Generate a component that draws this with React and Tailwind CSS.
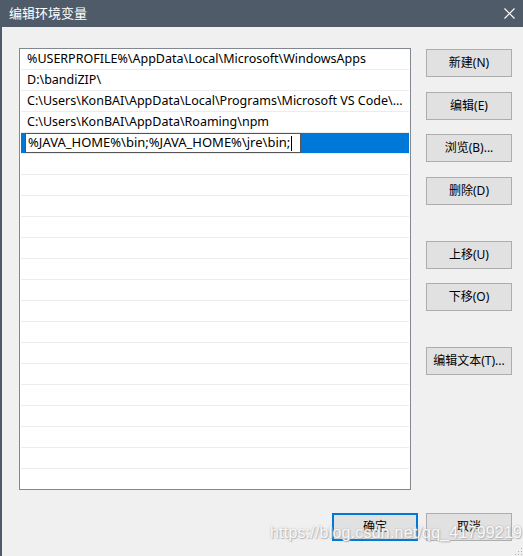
import React from 'react';

const rows = [
  '%USERPROFILE%\\AppData\\Local\\Microsoft\\WindowsApps',
  'D:\\bandiZIP\\',
  'C:\\Users\\KonBAI\\AppData\\Local\\Programs\\Microsoft VS Code\\...',
  'C:\\Users\\KonBAI\\AppData\\Roaming\\npm',
];

const font = { fontFamily: '"Noto Sans", "Noto Sans CJK SC", sans-serif' };

function Btn({ label, className = '', primary }) {
  return (
    <div
      className={`w-[86px] h-[28px] flex items-center justify-center text-[12px] text-black bg-[#e1e1e1] ${primary ? 'border-2 border-[#0078d7]' : 'border border-[#adadad]'} ${className}`}
    >
      {label}
    </div>
  );
}

export default function App() {
  const empty = Array.from({ length: 16 });
  return (
    <div className="w-[523px] h-[556px] flex flex-col overflow-hidden relative" style={font}>
      {/* title bar */}
      <div className="h-[27px] bg-[#4f5b69] flex items-center justify-between pl-[9px] pr-[8px] shrink-0">
        <span className="text-white text-[13px] leading-none">编辑环境变量</span>
        <svg width="11" height="11" viewBox="0 0 11 11">
          <path d="M0.5 0.5 L10.5 10.5 M10.5 0.5 L0.5 10.5" stroke="#fff" strokeWidth="1.2" />
        </svg>
      </div>

      <div className="flex-1 bg-[#f0f0f0] border-l-2 border-[#4f5b69] flex flex-col pl-[17px] pt-[21px]">
        <div className="flex">
          {/* list */}
          <div className="w-[392px] h-[442px] bg-white border border-[#828790] overflow-hidden">
            {rows.map((r, i) => (
              <div key={i} className="h-[21px] mx-[1px] border-b border-[#ececec] flex items-center pl-[6px] pt-[1px] text-[12.5px] text-black whitespace-nowrap">
                {r}
              </div>
            ))}
            <div className="h-[21px] mx-[1px] bg-[#0078d7] flex items-center pl-[4px] border-b border-[#ececec]">
              <div className="w-[276px] h-[20px] bg-white border border-[#555] flex items-center pl-[2px] text-[13px] text-black whitespace-nowrap">
                %JAVA_HOME%\bin;%JAVA_HOME%\jre\bin;
                <span className="inline-block w-[1px] h-[15px] bg-black ml-[1px]" />
              </div>
            </div>
            {empty.map((_, i) => (
              <div key={i} className="h-[21px] mx-[1px] border-b border-[#ececec]" />
            ))}
          </div>

          {/* side buttons */}
          <div className="flex flex-col ml-[15px]">
            <Btn label="新建(N)" className="mt-[1px]" />
            <Btn label="编辑(E)" className="mt-[15px]" />
            <Btn label="浏览(B)..." className="mt-[14px]" />
            <Btn label="删除(D)" className="mt-[15px]" />
            <Btn label="上移(U)" className="mt-[36px]" />
            <Btn label="下移(O)" className="mt-[14px]" />
            <Btn label="编辑文本(T)..." className="mt-[36px]" />
          </div>
        </div>

        {/* bottom buttons */}
        <div className="flex justify-end gap-[8px] pr-[11px] mt-[23px]">
          <Btn label="确定" primary />
          <Btn label="取消" />
        </div>
      </div>

      {/* watermark */}
      <div
        className="absolute left-[270px] top-[521px] text-[16px] text-white/90 tracking-[0.2px] pointer-events-none"
        style={{ fontFamily: '"Liberation Sans", sans-serif', textShadow: '0 0 2px #aaa, 1px 1px 1px #bbb' }}
      >
        https://blog.csdn.net/qq_41799219
      </div>

      {/* resize grip */}
      <svg className="absolute right-0 bottom-0" width="10" height="10" viewBox="0 0 10 10">
        <rect x="8" y="2" width="1" height="1" fill="#b0b0b0" />
        <rect x="5" y="5" width="1" height="1" fill="#b0b0b0" />
        <rect x="8" y="5" width="1" height="1" fill="#b0b0b0" />
        <rect x="2" y="8" width="1" height="1" fill="#b0b0b0" />
        <rect x="5" y="8" width="1" height="1" fill="#b0b0b0" />
        <rect x="8" y="8" width="1" height="1" fill="#b0b0b0" />
      </svg>
    </div>
  );
}
